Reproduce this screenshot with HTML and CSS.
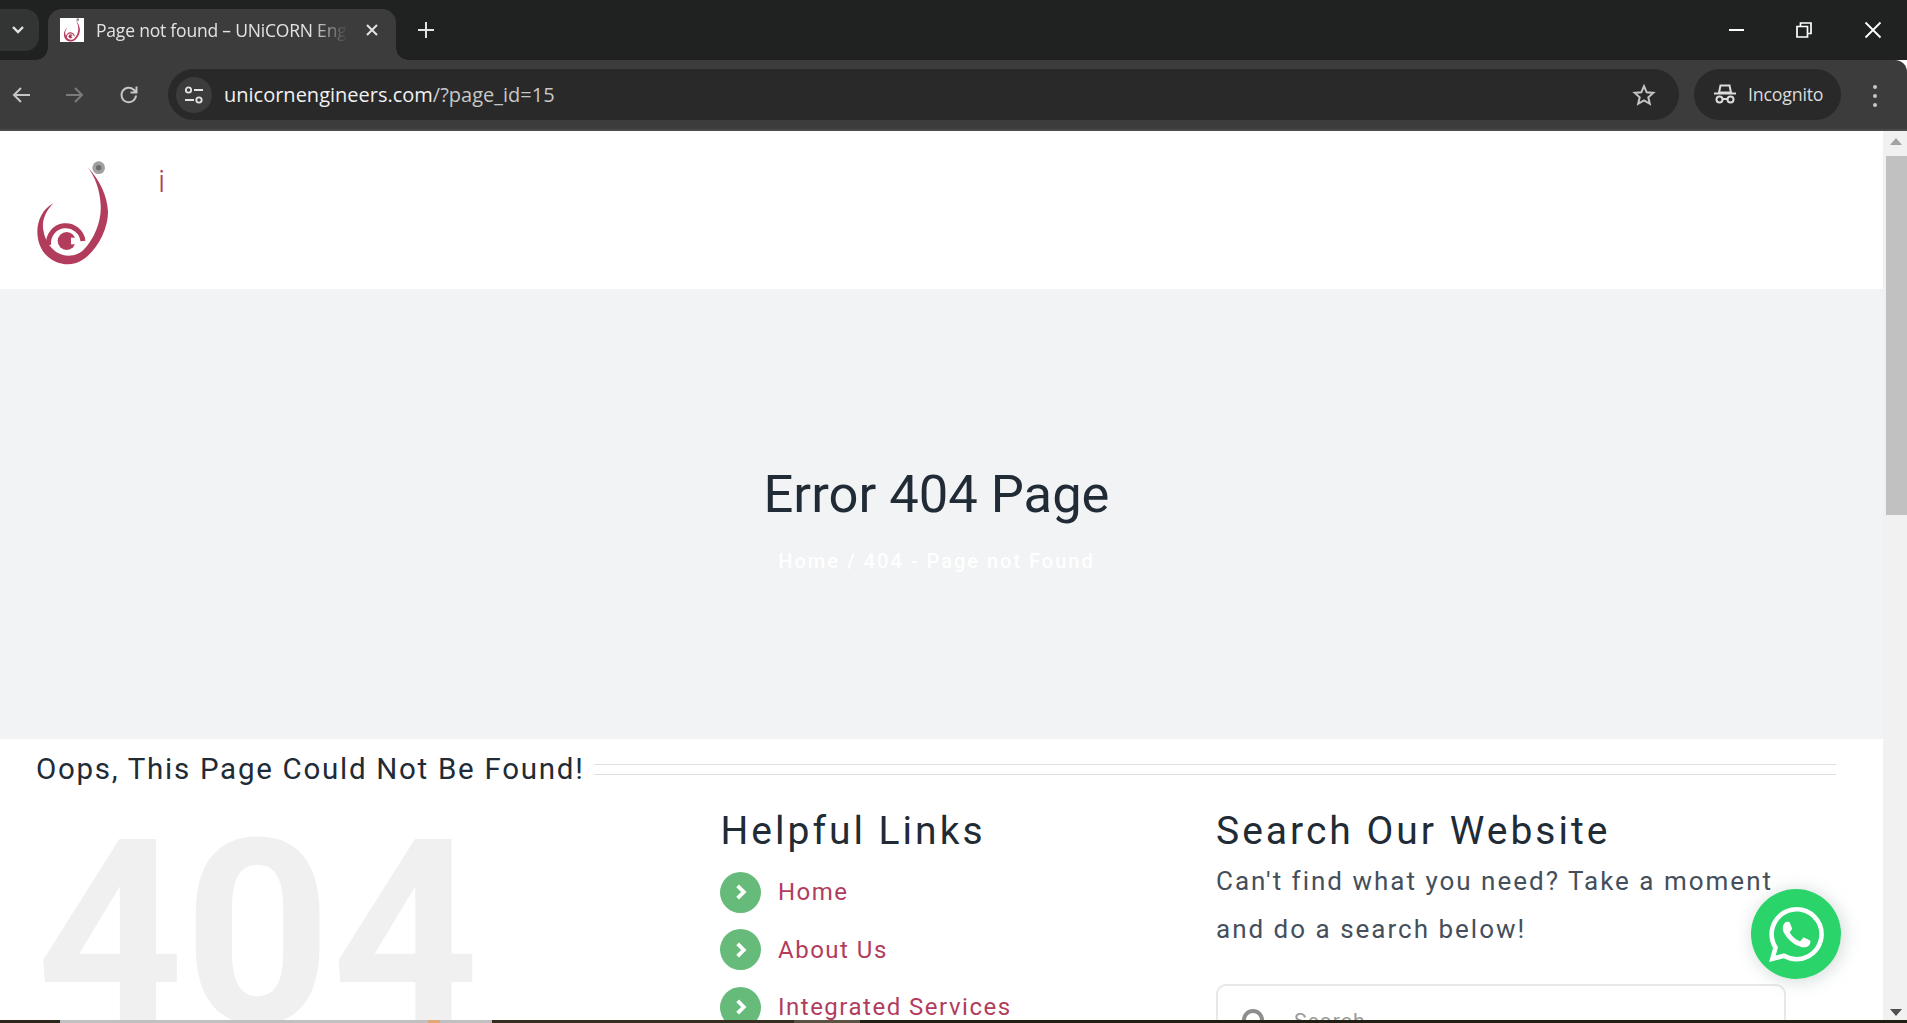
FILE: index.html
```html
<!DOCTYPE html>
<html lang="en">
<head>
<meta charset="utf-8">
<title>Page not found – UNiCORN Engineers</title>
<link rel="stylesheet" href="styles.css">
</head>
<body>
<svg class="defs" width="0" height="0" aria-hidden="true">
  <symbol id="logo" viewBox="99 90 240 318">
    <path fill="#b23c5c" d="M263 112C300 150 322 200 324 245C325 310 270 402 205 403C150 403 112 360 112 305C112 270 130 235 160 220C135 245 125 275 130 300C133 320 140 335 150 348C165 368 185 377 205 377C225 377 240 370 250 360C285 325 305 270 302 225C300 180 285 140 263 112Z"/>
    <path fill="none" stroke="#b23c5c" stroke-width="15" d="M146 345A49 49 0 0 1 249 333"/>
    <circle cx="200" cy="333" r="27" fill="#b23c5c"/>
    <rect x="213" y="323" width="24" height="20" fill="#fff"/>
    <circle cx="296" cy="113" r="19" fill="#a0a0a0"/>
    <circle cx="296" cy="113" r="8" fill="#6d6d6d"/>
  </symbol>
</svg>

<div class="browser">
  <div class="tabstrip">
    <div class="tabsearch">
      <svg width="14" height="10" viewBox="0 0 14 10"><path d="M2 2l5 5 5-5" fill="none" stroke="#e3e3e3" stroke-width="2.4"/></svg>
    </div>
    <div class="tab">
      <span class="favicon"><svg width="20" height="24"><use href="#logo"/></svg></span>
      <span class="tabtitle">Page not found – UNiCORN Engineers</span>
      <svg class="tabclose" width="14" height="14" viewBox="0 0 14 14"><path d="M2 2l10 10M12 2L2 12" stroke="#e3e3e3" stroke-width="2"/></svg>
    </div>
    <svg class="newtab" width="18" height="18" viewBox="0 0 18 18"><path d="M9 1v16M1 9h16" stroke="#e3e3e3" stroke-width="2"/></svg>
    <div class="winctrls">
      <svg width="16" height="16" viewBox="0 0 16 16"><path d="M1 8h15" stroke="#fff" stroke-width="2"/></svg>
      <svg width="16" height="16" viewBox="0 0 16 16"><path d="M1 4.500h10.500v10.500H1zM4.500 4V1H15v10.500h-3.500" fill="none" stroke="#fff" stroke-width="1.700"/></svg>
      <svg width="18" height="18" viewBox="0 0 18 18"><path d="M1.500 1.500l15 15M16.500 1.500l-15 15" stroke="#fff" stroke-width="1.800"/></svg>
    </div>
  </div>

  <div class="toolbar">
    <svg class="navicon" width="20" height="20" viewBox="0 0 20 20"><path d="M19 10H3M10 3l-7 7 7 7" fill="none" stroke="#c4c7c5" stroke-width="2"/></svg>
    <svg class="navicon" width="20" height="20" viewBox="0 0 20 20"><path d="M1 10h16M10 3l7 7-7 7" fill="none" stroke="#7a7c7b" stroke-width="2"/></svg>
    <svg class="navicon" width="20" height="20" viewBox="0 0 20 20"><path d="M17 10.500A7.300 7.300 0 1 1 14.800 4.700L17 7M17.500 1.500V7.500H11.500" fill="none" stroke="#c4c7c5" stroke-width="2"/></svg>
    <div class="omnibox">
      <span class="siteinfo">
        <svg width="20" height="18" viewBox="0 0 20 18"><circle cx="4.500" cy="4" r="2.700" fill="none" stroke="#e3e3e3" stroke-width="1.800"/><path d="M10 4h9M1 14h9" stroke="#e3e3e3" stroke-width="2"/><circle cx="15" cy="14" r="2.700" fill="none" stroke="#e3e3e3" stroke-width="1.800"/></svg>
      </span>
      <span class="url">unicornengineers.com<span class="urlpath">/?page_id=15</span></span>
      <svg class="star" width="24" height="24" viewBox="0 0 24 24"><path d="M12 3.200l2.700 6.100 6.600.6-5 4.400 1.500 6.500L12 17.400l-5.800 3.400 1.500-6.500-5-4.400 6.600-.6z" fill="none" stroke="#c4c7c5" stroke-width="2"/></svg>
    </div>
    <div class="incognito">
      <svg width="22" height="22" viewBox="0 0 22 22"><path d="M5 9.500L6.500 2.500h9L17 9.500zM0 10.500h22" fill="none" stroke="#dcdcdc" stroke-width="2"/><circle cx="5.500" cy="16.500" r="3" fill="none" stroke="#dcdcdc" stroke-width="2"/><circle cx="16.500" cy="16.500" r="3" fill="none" stroke="#dcdcdc" stroke-width="2"/><path d="M8.500 16h5" stroke="#dcdcdc" stroke-width="2"/></svg>
      <span>Incognito</span>
    </div>
    <div class="kebab"><i></i><i></i><i></i></div>
  </div>

  <div class="viewport">
    <main class="page">
      <header class="siteheader">
        <svg class="logo" width="80" height="106"><use href="#logo"/></svg>
        <span class="logotext">i</span>
      </header>

      <section class="hero">
        <h1>Error 404 Page</h1>
        <p class="crumbs">Home / 404 - Page not Found</p>
      </section>

      <section class="notfound">
        <div class="titlerow">
          <h2>Oops, This Page Could Not Be Found!</h2>
          <div class="rule"></div>
        </div>
        <div class="cols">
          <div class="bigcode">404</div>
          <div>
            <h3 class="linkshead">Helpful Links</h3>
            <ul class="links">
              <li><span class="bullet"><svg width="14" height="18" viewBox="0 0 12 16"><path d="M3 2.500L8.500 8 3 13.500" fill="none" stroke="#fff" stroke-width="3.400"/></svg></span><a>Home</a></li>
              <li><span class="bullet"><svg width="14" height="18" viewBox="0 0 12 16"><path d="M3 2.500L8.500 8 3 13.500" fill="none" stroke="#fff" stroke-width="3.400"/></svg></span><a>About Us</a></li>
              <li><span class="bullet"><svg width="14" height="18" viewBox="0 0 12 16"><path d="M3 2.500L8.500 8 3 13.500" fill="none" stroke="#fff" stroke-width="3.400"/></svg></span><a>Integrated Services</a></li>
            </ul>
          </div>
          <div class="searchcol">
            <h3>Search Our Website</h3>
            <p>Can't find what you need? Take a moment and do a search below!</p>
            <div class="searchbox">
              <svg width="26" height="26" viewBox="0 0 26 26"><circle cx="11" cy="11" r="9" fill="none" stroke="#8d8d8d" stroke-width="4"/></svg>
              <span>Search</span>
            </div>
          </div>
        </div>
      </section>
    </main>

    <div class="scrollbar">
      <svg class="arrow" width="12" height="7" viewBox="0 0 12 7"><path d="M6 0l6 7H0z" fill="#a3a3a3"/></svg>
      <div class="thumb"></div>
      <svg class="arrow down" width="12" height="7" viewBox="0 0 12 7"><path d="M0 0h12L6 7z" fill="#505050"/></svg>
    </div>

    <a class="whatsapp">
      <svg width="55" height="55" viewBox="0 0 24 24"><path fill="#fff" d="M17.472 14.382c-.297-.149-1.758-.867-2.03-.967-.273-.099-.471-.148-.67.15-.197.297-.767.966-.94 1.164-.173.199-.347.223-.644.075-.297-.15-1.255-.463-2.39-1.475-.883-.788-1.48-1.761-1.653-2.059-.173-.297-.018-.458.13-.606.134-.133.298-.347.446-.52.149-.174.198-.298.298-.497.099-.198.05-.371-.025-.52-.075-.149-.669-1.612-.916-2.207-.242-.579-.487-.5-.669-.51-.173-.008-.371-.01-.57-.01-.198 0-.52.074-.792.372-.272.297-1.04 1.016-1.04 2.479 0 1.462 1.065 2.875 1.213 3.074.149.198 2.096 3.2 5.077 4.487.709.306 1.262.489 1.694.625.712.227 1.36.195 1.871.118.571-.085 1.758-.719 2.006-1.413.248-.694.248-1.289.173-1.413-.074-.124-.272-.198-.57-.347m-5.421 7.403h-.004a9.87 9.87 0 01-5.031-1.378l-.361-.214-3.741.982.998-3.648-.235-.374a9.86 9.86 0 01-1.51-5.26c.001-5.45 4.436-9.884 9.888-9.884 2.64 0 5.122 1.03 6.988 2.898a9.825 9.825 0 012.893 6.994c-.003 5.45-4.437 9.884-9.885 9.884m8.413-18.297A11.815 11.815 0 0012.05 0C5.495 0 .16 5.335.157 11.892c0 2.096.547 4.142 1.588 5.945L.057 24l6.305-1.654a11.882 11.882 0 005.683 1.448h.005c6.554 0 11.89-5.335 11.893-11.893a11.821 11.821 0 00-3.48-8.413z"/></svg>
    </a>
  </div>

  <div class="taskbar">
    <span class="tb-a"></span>
    <span class="tb-b"><i></i></span>
    <span class="tb-a tb-c"></span>
    <span class="tb-d"></span>
    <span class="tb-a tb-e"></span>
  </div>
</div>
</body>
</html>
```

FILE: styles.css
```css
* { box-sizing: border-box; }
html, body { margin: 0; height: 100%; overflow: hidden; background: #fff; }
body { font-family: Roboto, "Liberation Sans", sans-serif; }
.defs { display: block; height: 0; }
h1, h2, h3, p, ul { margin: 0; padding: 0; }

.browser { display: flex; flex-direction: column; width: 1907px; height: 1023px; }

/* Tab strip */
.tabstrip { height: 60px; flex: none; background: #202221; display: flex; align-items: flex-start; padding-top: 9px; }
.tabsearch { width: 39px; height: 42px; background: #333534; border-radius: 0 14px 14px 0; display: flex; align-items: center; justify-content: center; padding-right: 3px; margin-right: 9px; }
.tab { position: relative; width: 348px; height: 51px; background: #3c3c3c; border-radius: 14px 14px 0 0; display: flex; align-items: center; padding: 0 17px 9px 12px; }
.tab::before, .tab::after { content: ""; position: absolute; bottom: 0; width: 12px; height: 12px; }
.tab::before { left: -12px; background: radial-gradient(circle at 0 0, #202221 11.500px, #3c3c3c 12px); }
.tab::after { right: -12px; background: radial-gradient(circle at 100% 0, #202221 11.500px, #3c3c3c 12px); }
.favicon { width: 24px; height: 24px; background: #fff; display: flex; align-items: center; justify-content: center; flex: none; }
.tabtitle { flex: 1; margin-left: 12px; color: #e3e3e3; font: 400 17.500px "Open Sans", sans-serif; white-space: nowrap; overflow: hidden; -webkit-mask-image: linear-gradient(90deg, #000 86%, transparent 100%); mask-image: linear-gradient(90deg, #000 86%, transparent 100%); letter-spacing: -.2px; }
.tabclose { flex: none; margin-left: 17px; }
.newtab { margin: 12px 0 0 21px; }
.winctrls { margin-left: auto; display: flex; align-items: center; gap: 52px; padding: 12px 25px 0 0; }

/* Toolbar */
.toolbar { height: 71px; flex: none; background: #3c3c3c; border-bottom: 2px solid #4a4a4a; border-top-right-radius: 12px; display: flex; align-items: flex-start; padding: 9px 0 0 11px; }
.navicon { margin: 16px 34px 0 0; flex: none; }
.navicon:nth-child(3) { margin-right: 29px; }
.omnibox { width: 1511px; height: 51px; background: #292929; border-radius: 26px; display: flex; align-items: center; padding: 0 23px 0 8px; flex: none; }
.siteinfo { width: 36px; height: 36px; border-radius: 50%; background: #3c3c3c; display: flex; align-items: center; justify-content: center; flex: none; }
.url { margin-left: 12px; color: #f1f1f1; font: 400 20px "Open Sans", sans-serif; }
.urlpath { color: #c7c7c7; }
.star { margin-left: auto; }
.incognito { width: 147px; height: 51px; margin-left: 15px; padding: 0 0 2px 20px; background: #292929; border-radius: 26px; color: #dcdcdc; font: 400 17.800px "Open Sans", sans-serif; display: flex; align-items: center; gap: 12px; flex: none; letter-spacing: -.2px; }
.kebab { display: flex; flex-direction: column; gap: 5px; margin: 16px 0 0 32px; }
.kebab i { width: 4px; height: 4px; border-radius: 50%; background: #c8c8c8; }

/* Viewport */
.viewport { position: relative; flex: 1; display: flex; min-height: 0; overflow: hidden; }
.page { width: 1883px; flex: none; height: 889px; overflow: hidden; }

.siteheader { height: 158px; display: flex; align-items: flex-start; padding: 29px 0 0 33px; background: #fff; }
.logo { flex: none; }
.logotext { margin-left: 45px; margin-top: -1.500px; color: #b23c5c; font-size: 32px; font-weight: 300; line-height: 44px; }

.hero { height: 450px; background: #f1f3f5; padding: 173px 10px 0 0; text-align: center; }
.hero h1 { font-size: 52.500px; font-weight: 400; line-height: 64px; color: #212b36; }
.crumbs { margin-top: 23px; font-size: 20px; font-weight: 500; line-height: 24px; letter-spacing: 2px; color: #fff; }

.notfound { padding: 12px 47px 0 36px; }
.titlerow { display: flex; align-items: center; gap: 10px; }
.titlerow h2 { font-size: 29.500px; font-weight: 400; line-height: 36px; letter-spacing: 1.720px; color: #212b36; white-space: nowrap; }
.rule { flex: 1; height: 11px; border-top: 1px solid #e0e0e0; border-bottom: 1px solid #e0e0e0; }

.cols { display: grid; grid-template-columns: 686px 495px 1fr; padding-top: 20px; }
.bigcode { margin-top: -1px; font-size: 257.500px; font-weight: 700; line-height: 257.500px; color: #f0f0f0; }
.cols h3 { font-size: 39px; font-weight: 400; line-height: 48px; letter-spacing: 3px; color: #212b36; white-space: nowrap; }
.cols .linkshead { margin-left: -1.500px; }
.links { list-style: none; margin-top: 16.500px; display: flex; flex-direction: column; gap: 16.500px; }
.links li { display: flex; align-items: center; gap: 17px; height: 41px; }
.bullet { width: 41px; height: 41px; border-radius: 50%; background: #66bb7a; display: flex; align-items: center; justify-content: center; flex: none; margin-left: -2px; }
.links a { font-size: 24px; letter-spacing: 1.500px; color: #b23c5c; white-space: nowrap; }
.searchcol p { margin-top: 3px; font-size: 26px; line-height: 47.500px; letter-spacing: 2px; color: #454f5b; }
.searchcol { width: 570px; margin-left: -1px; }
.searchbox { margin-top: 31px; height: 80px; border: 2px solid #e8e8e8; border-radius: 10px; display: flex; align-items: flex-start; gap: 26px; padding: 23px 0 0 24px; font-size: 21px; line-height: 24px; letter-spacing: 1.200px; color: #9a9a9a; }

/* Scrollbar */
.scrollbar { width: 24px; flex: none; background: #f1f1f1; display: flex; flex-direction: column; align-items: center; padding: 7px 0 4px 2px; }
.thumb { width: 21px; height: 359px; margin-top: 11px; background: #c1c1c1; }
.arrow { flex: none; }
.arrow.down { margin-top: auto; }

.whatsapp { position: absolute; left: 1751px; top: 758px; width: 90px; height: 90px; border-radius: 50%; background: #2bd46b; box-shadow: 2px 2px 18px rgba(100, 130, 120, .3); display: flex; align-items: center; justify-content: center; }

/* Sliver of OS taskbar */
.taskbar { height: 3px; flex: none; display: flex; background: #211e14; }
.tb-a { width: 60px; background: #2c261a; }
.tb-b { width: 432px; background: #c0c0c0; display: flex; justify-content: flex-end; padding-right: 52px; }
.tb-b i { width: 12px; background: #e0a878; }
.tb-c { width: 302px; background: #342d20; }
.tb-d { width: 66px; background: #5c5244; }
.tb-e { flex: 1; background: #211e14; }
```
